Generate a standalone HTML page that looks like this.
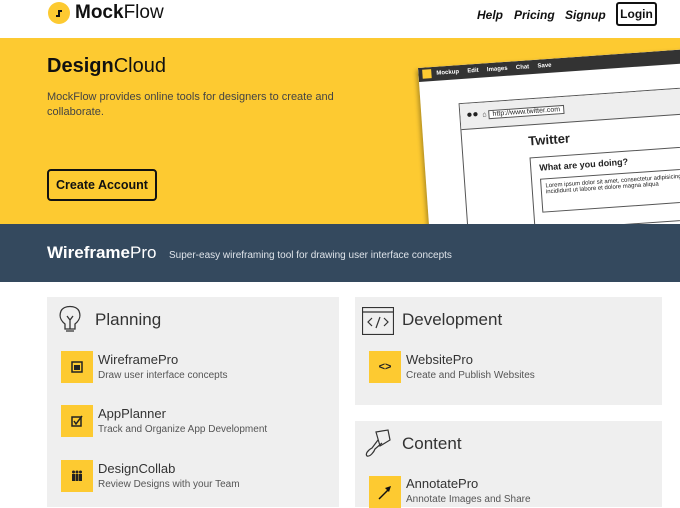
<!DOCTYPE html>
<html><head><style>
*{margin:0;padding:0;box-sizing:border-box}
body{width:680px;height:507px;overflow:hidden;background:#fff;font-family:"Liberation Sans",Arial,sans-serif;position:relative;color:#333}
.abs{position:absolute}
.hdr a{position:absolute;top:8px;font-weight:bold;font-style:italic;font-size:12px;color:#111}
.yel{position:absolute;left:0;top:38px;width:680px;height:186px;background:#fdca31;overflow:hidden}
.dark{position:absolute;left:0;top:224px;width:680px;height:58px;background:#34495e}
.panel{position:absolute;background:#efefef}
.ptitle{position:absolute;font-size:17px;color:#333}
.ic{position:absolute;width:32px;height:32px;background:#fdca31;display:flex;align-items:center;justify-content:center}
.pn{position:absolute;font-size:13px;color:#333}
.pd{position:absolute;font-size:10px;color:#555}
</style></head><body>
<div class="hdr">
<div class="abs" style="left:48px;top:2px;width:22px;height:22px;border-radius:50%;background:#fdca31"></div>
<svg class="abs" style="left:52px;top:6px" width="14" height="14"><path d="M4 10 L7 10 L7 5 L10 5" stroke="#111" stroke-width="2" fill="none"/></svg>
<div class="abs" style="left:75px;top:2px;font-size:19px;color:#111"><b>Mock</b>Flow</div>
<a style="left:477px">Help</a><a style="left:514px">Pricing</a><a style="left:565px">Signup</a>
<div class="abs" style="left:616px;top:2px;width:41px;height:24px;border:2px solid #111;border-radius:3px;font-size:12px;font-weight:bold;text-align:center;line-height:20px;color:#111">Login</div>
</div>
<div class="yel">
<div class="abs" style="left:47px;top:17px;font-size:20px;color:#111"><b>Design</b>Cloud</div>
<div class="abs" style="left:47px;top:52px;font-size:11px;line-height:15px;color:#444;width:292px">MockFlow provides online tools for designers to create and collaborate.</div>
<div class="abs" style="left:47px;top:131px;width:110px;height:32px;border:2px solid #111;border-radius:4px;font-size:12.5px;font-weight:bold;text-align:center;line-height:28px;color:#111">Create Account</div>
<div class="abs" style="left:418px;top:30px;width:300px;height:200px;background:#fff;transform:rotate(-4deg);transform-origin:0 0;box-shadow:-2px 2px 4px rgba(0,0,0,.3);overflow:hidden;font-size:6px;color:#222">
<div style="height:14px;background:#333;color:#fff;font-size:6px;line-height:14px;padding-left:4px;font-weight:bold"><span style="background:#fdca31;display:inline-block;width:9px;height:9px;vertical-align:middle"></span>&nbsp;&nbsp;&nbsp;Mockup &nbsp;&nbsp;&nbsp; Edit &nbsp;&nbsp;&nbsp; Images &nbsp;&nbsp;&nbsp; Chat &nbsp;&nbsp;&nbsp; Save</div>
<div style="position:absolute;left:38px;top:38px;width:280px;height:170px;border:1px solid #555">
<div style="height:26px;background:#eee;border-bottom:1px solid #555;padding:6px 6px;font-size:7px"><span style="font-size:10px">●●</span> &nbsp;⌂ <span style="border:1px solid #555;background:#fff;padding:0 3px">http://www.twitter.com</span></div>
<div style="position:absolute;left:66px;top:34px;font-size:13px;font-weight:bold">Twitter</div>
<div style="position:absolute;left:66px;top:58px;width:200px;height:74px;border:1px solid #555;padding:5px 8px;font-size:9px;font-weight:bold">What are you doing?<div style="margin-top:6px;border:1px solid #555;height:34px;font-size:6px;font-weight:normal;padding:4px">Lorem ipsum dolor sit amet, consectetur adipisicing tempor incididunt ut labore et dolore magna aliqua</div></div>
</div></div>
</div>
<div class="dark">
<div class="abs" style="left:47px;top:19px;font-size:17px;color:#fff"><b>Wireframe</b>Pro</div>
<div class="abs" style="left:169px;top:26px;font-size:10px;color:#dfe4ea">Super-easy wireframing tool for drawing user interface concepts</div>
</div>
<div class="panel" style="left:47px;top:297px;width:292px;height:210px"></div>
<div class="panel" style="left:355px;top:297px;width:307px;height:108px"></div>
<div class="panel" style="left:355px;top:421px;width:307px;height:86px"></div>
<svg class="abs" style="left:58px;top:304px" width="24" height="30" fill="none" stroke="#333" stroke-width="1.3"><path d="M7 20 C2 16 1 12 3 7 C6 1 18 1 21 7 C23 12 22 16 17 20 L17 25 L7 25 Z M9 12 L12 16 L15 12 M12 16 L12 25 M8 27 L16 27"/></svg>
<div class="ptitle" style="left:95px;top:310px">Planning</div>
<svg class="abs" style="left:362px;top:307px" width="32" height="28" fill="none" stroke="#333" stroke-width="1.2"><rect x="0.5" y="0.5" width="31" height="27"/><path d="M0 5 H32 M10 11 L6 15 L10 19 M22 11 L26 15 L22 19 M18 10 L14 21"/></svg>
<div class="ptitle" style="left:402px;top:310px">Development</div>
<svg class="abs" style="left:362px;top:428px" width="30" height="30" fill="none" stroke="#333" stroke-width="1.2"><path d="M14 4 L26 2 L28 12 L18 18 Z M16 12 L10 20 C6 22 3 26 5 28 C8 29 12 24 13 21 L20 15"/></svg>
<div class="ptitle" style="left:402px;top:434px">Content</div>
<div class="ic" style="left:61px;top:351px"><svg width="12" height="12"><rect x="1" y="1" width="10" height="10" fill="none" stroke="#222" stroke-width="1.5"/><rect x="3" y="4" width="6" height="5" fill="#222"/></svg></div>
<div class="pn" style="left:98px;top:352px">WireframePro</div><div class="pd" style="left:98px;top:370px">Draw user interface concepts</div>
<div class="ic" style="left:61px;top:405px"><svg width="12" height="12" fill="none" stroke="#222" stroke-width="1.5"><rect x="1" y="2" width="9" height="9"/><path d="M3 6 L5 9 L11 1"/></svg></div>
<div class="pn" style="left:98px;top:406px">AppPlanner</div><div class="pd" style="left:98px;top:424px">Track and Organize App Development</div>
<div class="ic" style="left:61px;top:460px"><svg width="12" height="12" fill="#222"><circle cx="2.5" cy="2" r="1.5"/><circle cx="6" cy="2" r="1.5"/><circle cx="9.5" cy="2" r="1.5"/><rect x="1" y="4" width="3" height="7"/><rect x="4.5" y="4" width="3" height="7"/><rect x="8" y="4" width="3" height="7"/></svg></div>
<div class="pn" style="left:98px;top:461px">DesignCollab</div><div class="pd" style="left:98px;top:479px">Review Designs with your Team</div>
<div class="ic" style="left:369px;top:351px"><span style="font-size:11px;font-weight:bold;color:#222">&lt;&gt;</span></div>
<div class="pn" style="left:406px;top:352px">WebsitePro</div><div class="pd" style="left:406px;top:370px">Create and Publish Websites</div>
<div class="ic" style="left:369px;top:476px"><svg width="16" height="16"><path d="M2 15 L12 5" stroke="#111" stroke-width="1.5"/><path d="M14 2 L8 4 L12 8 Z" fill="#111"/></svg></div>
<div class="pn" style="left:406px;top:476px">AnnotatePro</div><div class="pd" style="left:406px;top:494px">Annotate Images and Share</div>
</body></html>
